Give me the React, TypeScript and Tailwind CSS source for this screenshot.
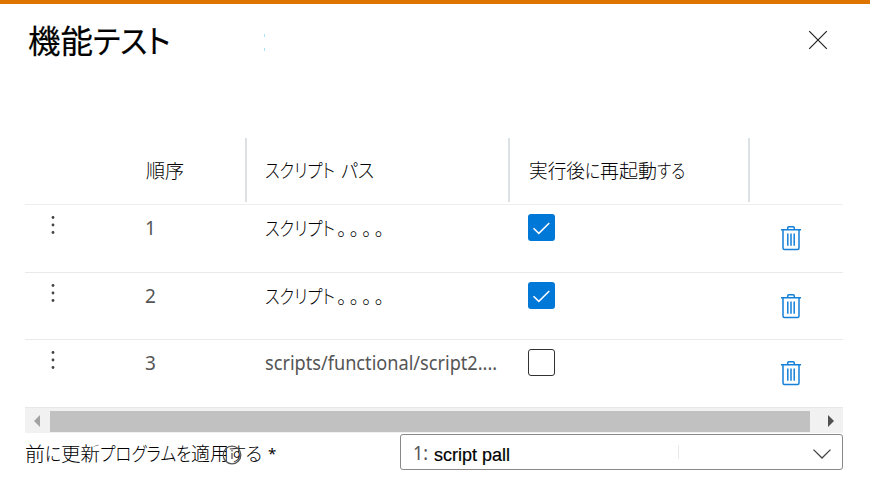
import React, { useLayoutEffect, useRef, useState } from "react";

const jp = "font-['Noto_Sans_CJK_JP',sans-serif] [font-feature-settings:'palt'] whitespace-nowrap";
const latin = "font-['Noto_Sans','Open_Sans',sans-serif] whitespace-nowrap text-[#555]";

/* Condenses a run of text horizontally to the given advance width. */
function Fit({ width, children }: { width: number; children: string }) {
  const ref = useRef<HTMLSpanElement>(null);
  const [scale, setScale] = useState(1);
  useLayoutEffect(() => {
    const measure = () => {
      if (ref.current) setScale(width / ref.current.offsetWidth);
    };
    measure();
    document.fonts.ready.then(measure);
  }, [width]);
  return (
    <span className="inline-block whitespace-nowrap" style={{ width }}>
      <span ref={ref} className="inline-block origin-left" style={{ transform: `scaleX(${scale})` }}>
        {children}
      </span>
    </span>
  );
}

function CloseIcon() {
  return (
    <svg width="20" height="20" viewBox="0 0 20 20" fill="none" stroke="#222" strokeWidth="1.2">
      <path d="M1.2 1.2l17.6 17.6M18.8 1.2L1.2 18.8" />
    </svg>
  );
}

function MoreIcon() {
  return (
    <svg width="4" height="20" viewBox="0 0 4 20" fill="#444">
      <circle cx="2" cy="2.5" r="1.4" />
      <circle cx="2" cy="10" r="1.4" />
      <circle cx="2" cy="17.5" r="1.4" />
    </svg>
  );
}

function TrashIcon() {
  return (
    <svg width="20" height="25" viewBox="0 0 20 25" fill="none" stroke="#1480d8" strokeWidth="1.5">
      <path d="M0 3.8h20M6.7 3.5V2q0-1.2 1.2-1.2h4.2q1.2 0 1.2 1.2v1.5M2 3.8v18.1q0 1.5 1.5 1.5h13q1.5 0 1.5-1.5V3.8" />
      <path d="M6.8 7.4v12.4M10 7.4v12.4M13.2 7.4v12.4" strokeWidth="1.5" />
    </svg>
  );
}

function Checkbox({ checked }: { checked: boolean }) {
  if (!checked) return <div className="size-[27px] rounded-[3px] border border-[#323130] bg-white" />;
  return (
    <div className="size-[27px] rounded-[3px] bg-[#0078d7]">
      <svg width="27" height="27" viewBox="0 0 27 27" fill="none" stroke="#fff" strokeWidth="1.5">
        <path d="M5.5 14.2l5.3 5.2L21.3 9" />
      </svg>
    </div>
  );
}

const rows = [
  { order: "1", path: "スクリプト", dots: "。。。。", checked: true },
  { order: "2", path: "スクリプト", dots: "。。。。", checked: true },
  { order: "3", path: "scripts/functional/script2....", dots: "", checked: false },
];

const columns = "grid grid-cols-[222px_263px_240px_93px]";

export default function App() {
  return (
    <div className="h-[487px] w-[870px] overflow-hidden border-t-4 border-[#dd7500] bg-white">
      <header className="flex h-[134px] items-start justify-between pl-[28px] pr-[42px]">
        <h1 className={`${jp} flex w-[236px] pt-[11px] text-[32px] font-normal leading-[48px] text-black [-webkit-text-stroke:0.2px_black]`}>
          <Fit width={65}>機能</Fit>
          <Fit width={77}>テスト</Fit>
        </h1>
        <div className="mr-auto flex flex-col gap-[11px] pt-[30px]">
          <i className="h-[3px] w-px bg-[#a8e4f8]" />
          <i className="h-[3px] w-px bg-[#a8e4f8]" />
        </div>
        <button className="mt-[26px]" aria-label="閉じる"><CloseIcon /></button>
      </header>

      <main className="ml-[25px] w-[818px]">
        <div className={`${columns} h-[67px] border-b border-[#efeeed] pb-[2px] text-[19px] font-light leading-[28px] text-black ${jp}`}>
          <div className="border-r-2 border-[#dce1e6] pl-[121px] pt-[18px]">順序</div>
          <div className="flex gap-[6px] border-r-2 border-[#dce1e6] pl-[18px] pt-[18px]">
            <Fit width={70}>スクリプト</Fit>
            <Fit width={33}>パス</Fit>
          </div>
          <div className="flex border-r-2 border-[#dce1e6] pl-[19px] pt-[18px]">
            <Fit width={56}>実行後</Fit>
            <Fit width={15}>に</Fit>
            <Fit width={57}>再起動</Fit>
            <Fit width={28}>する</Fit>
          </div>
        </div>
        {rows.map((row, i) => (
          <div key={row.order} className={`${columns} ${i === 0 ? "h-[68px]" : "h-[67px]"} ${i < 2 ? "border-b border-[#e9e9e9]" : ""}`}>
            <div className="flex pl-[26px]">
              <div className="pt-[10px]"><MoreIcon /></div>
              <span className={`${latin} pl-[90px] pt-[9px] text-[19px] leading-[28px]`}>{row.order}</span>
            </div>
            <div className="pl-[18px] pt-[9px]">
              {row.dots ? (
                <div className={`${jp} flex gap-[2px] text-[19px] font-light leading-[28px] text-black`}>
                  <Fit width={70}>{row.path}</Fit>
                  <span className="tracking-[3px]">{row.dots}</span>
                </div>
              ) : (
                <div className={`${latin} text-[19px] leading-[28px]`}>
                  <Fit width={232}>{row.path}</Fit>
                </div>
              )}
            </div>
            <div className="pl-[18px] pt-[9px]"><Checkbox checked={row.checked} /></div>
            <button className="flex items-start pl-[31px] pt-[21px]" aria-label="削除"><TrashIcon /></button>
          </div>
        ))}
        <div className="flex h-[26px] items-center justify-between border-t border-[#e8e8e8] bg-[#f1f1f1]">
          <svg width="25" height="12" viewBox="0 0 25 12" fill="#a3a3a3"><path d="M15 0v12L9 6z" /></svg>
          <div className="mt-px h-[21px] w-[760px] bg-[#c1c1c1]" />
          <svg width="33" height="12" viewBox="0 0 33 12" fill="#505050"><path d="M18 0v12l6-6z" /></svg>
        </div>
        <div className="flex pt-px">
          <label className={`${jp} relative flex w-[375px] pt-[5px] text-[19px] font-light leading-[28px] text-black`}>
            <Fit width={20}>前</Fit>
            <Fit width={16}>に</Fit>
            <Fit width={39}>更新</Fit>
            <Fit width={91}>プログラムを</Fit>
            <Fit width={38}>適用</Fit>
            <Fit width={33}>する</Fit>
            <span className="ml-[6px] font-['Noto_Sans',sans-serif] text-[15px] font-normal">*</span>
            <svg className="absolute left-[197px] top-[11px]" width="20" height="20" viewBox="0 0 20 20" fill="none" stroke="#555" strokeWidth="1.3">
              <circle cx="10" cy="10" r="8.8" /><path d="M10 8v6M10 5v1.5" />
            </svg>
          </label>
          <div className="flex h-[36px] w-[443px] rounded-[3px] border border-[#8a8886] bg-white">
            <span className={`${latin} ml-[12px] pt-[4px] text-[19px] leading-[28px]`}><Fit width={15}>1:</Fit></span>
            <span className="ml-[6px] w-[244px] pt-[7px] font-['Liberation_Sans',Arial,sans-serif] text-[18px] leading-[26px] text-black [-webkit-text-stroke:0.2px_black]">script pall</span>
            <i className="mt-[10px] h-[14px] w-px bg-[#e8e8e8]" />
            <svg className="ml-auto mr-[11px] mt-[14px]" width="18" height="10" viewBox="0 0 18 10" fill="none" stroke="#444" strokeWidth="1.3"><path d="M.5.6L9 9 17.5.6" /></svg>
          </div>
        </div>
      </main>
    </div>
  );
}
